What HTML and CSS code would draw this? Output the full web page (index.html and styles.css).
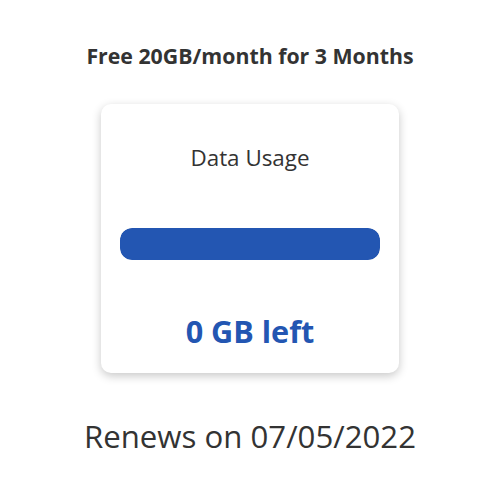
FILE: index.html
```html
<!DOCTYPE html>
<html>
<head>
<meta charset="utf-8">
<link rel="stylesheet" href="styles.css">
</head>
<body>
<main class="page">
  <h1 class="title">Free 20GB/month for 3 Months</h1>
  <section class="card">
    <h2 class="card-label">Data Usage</h2>
    <div class="bar"><div class="bar-fill" style="width:100%"></div></div>
    <p class="left">0 GB left</p>
  </section>
  <p class="renews">Renews on 07/05/2022</p>
</main>
</body>
</html>
```
FILE: styles.css
```css
html, body {
  margin: 0;
  padding: 0;
  background: #ffffff;
}
body {
  font-family: "Open Sans", "Liberation Sans", sans-serif;
  color: #333333;
}
.page {
  display: flex;
  flex-direction: column;
  align-items: center;
  padding-top: 43px;
}
.title {
  margin: 0;
  font-size: 21.3px;
  font-weight: 700;
  line-height: 26px;
}
.card {
  margin-top: 35px;
  width: 298px;
  height: 269px;
  box-sizing: border-box;
  border-radius: 10px;
  background: #fff;
  box-shadow: 0 3px 10px rgba(0,0,0,0.22);
  display: flex;
  flex-direction: column;
  align-items: center;
  padding: 42px 19px 0;
}
.card-label {
  margin: 0;
  font-size: 22.4px;
  font-weight: 400;
  line-height: 24px;
}
.bar {
  margin-top: 58px;
  width: 100%;
  height: 32px;
  border-radius: 12px;
  background: #e5e5e5;
  overflow: hidden;
}
.bar-fill {
  height: 100%;
  background: #2356b2;
  border-radius: 12px;
}
.left {
  margin: 53px 0 0;
  font-size: 30.6px;
  font-weight: 700;
  line-height: 36px;
  color: #2356b2;
}
.renews {
  margin: 44px 0 0;
  font-size: 31.2px;
  font-weight: 400;
  line-height: 38px;
}
```
